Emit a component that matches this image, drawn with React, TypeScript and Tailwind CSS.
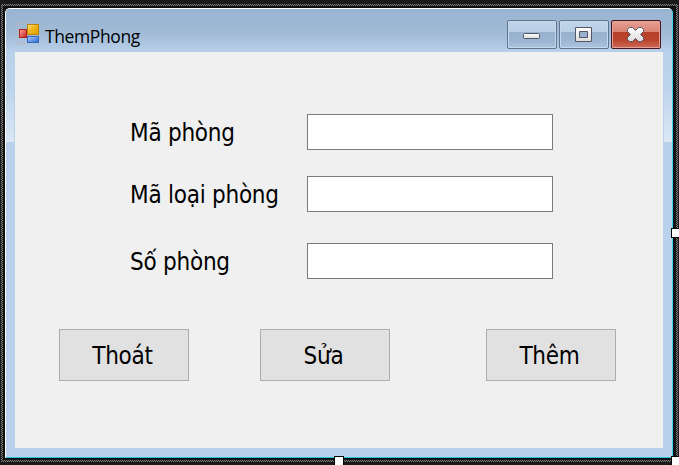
import type { ReactNode } from "react";

const labelFont =
  "font-['DejaVu_Sans_Condensed','DejaVu_Sans',sans-serif] [font-stretch:condensed]";

function AppIcon() {
  return (
    <svg width="22" height="22" viewBox="0 0 22 22">
      <defs>
        <linearGradient id="yel" x1="0" y1="0" x2="1" y2="1">
          <stop offset="0" stopColor="#fbe491" />
          <stop offset=".45" stopColor="#f2b51c" />
          <stop offset="1" stopColor="#dc9c05" />
        </linearGradient>
        <linearGradient id="red" x1="0" y1="0" x2="1" y2="1">
          <stop offset="0" stopColor="#f6a9a0" />
          <stop offset="1" stopColor="#c81c1c" />
        </linearGradient>
        <linearGradient id="blu" x1="0" y1="0" x2="1" y2="1">
          <stop offset="0" stopColor="#a9cbff" />
          <stop offset="1" stopColor="#2b66d4" />
        </linearGradient>
      </defs>
      <path d="M9 .5H.5V20.5H9" fill="none" stroke="#b9b9bd" />
      <rect x="9.5" y="1.5" width="11" height="10" fill="url(#yel)" stroke="#b98508" />
      <rect x="1.5" y="6.5" width="7" height="8" fill="url(#red)" stroke="#b3201f" />
      <rect x="9.5" y="13.5" width="11" height="6" fill="url(#blu)" stroke="#3568b5" />
    </svg>
  );
}

function CaptionButton({ children, close }: { children: ReactNode; close?: boolean }) {
  const frame = close
    ? "border-[#47141f] shadow-[inset_0_0_0_1px_#e5a296] bg-[linear-gradient(#e5a195_0%,#d98072_42%,#b7402a_42%,#b9432d_70%,#cd6a55_100%)]"
    : "border-[#61758f] shadow-[inset_0_0_0_1px_#c5d9ed] bg-[linear-gradient(#c1d5ea_0%,#b8cee5_42%,#98b1cd_42%,#9bb5d1_70%,#abc4de_100%)]";
  return (
    <div className={`flex h-[29px] w-[50px] items-center justify-center rounded-[2px] border ${frame}`}>
      <svg className="shrink-0" width="48" height="27" viewBox="0 0 48 27">
        <defs>
          <linearGradient id="glyph" x1="0" y1="0" x2="0" y2="1">
            <stop offset="0" stopColor="#ffffff" />
            <stop offset="1" stopColor="#dcdcdc" />
          </linearGradient>
        </defs>
        {children}
      </svg>
    </div>
  );
}

function Field({ label, className }: { label: string; className: string }) {
  return (
    <div className={`flex h-9 items-center ${className}`}>
      <label
        className={`w-[178px] pt-0.5 pl-px text-2xl leading-9 whitespace-pre text-black ${labelFont} tracking-[-0.25px]`}
      >
        {label}
      </label>
      <input className="h-9 w-[246px] border border-[#7a7a7a] bg-white px-2 outline-none" />
    </div>
  );
}

function FormButton({ children }: { children: ReactNode }) {
  return (
    <button
      className={`h-[52px] w-[130px] border border-[#adadad] bg-[#e1e1e1] pt-0.5 pr-[3px] text-2xl text-black ${labelFont} tracking-[-0.25px]`}
    >
      {children}
    </button>
  );
}

export default function App() {
  return (
    <div className="relative h-[465px] w-[679px] overflow-hidden bg-[#1b1a1b] pt-1 pl-px">
      <div className="h-[458px] w-[677px] bg-[repeating-conic-gradient(#858585_0%_25%,#1b1a1b_0%_50%)] bg-size-[2px_2px] p-0.5">
        <div className="h-[454px] w-[673px] bg-[#111] pt-[2px] pl-[2px]">
          <div className="flex h-[450px] w-[668px] flex-col overflow-hidden rounded-t-[5px] border-t border-r border-b border-l border-t-white border-r-[#35d4f4] border-b-[#20c5dc] border-l-white bg-[#b9d1ea]">
            <div className="flex h-[43px] shrink-0 items-start bg-linear-to-b from-[#99b4d1] via-[#a2bbd7] via-60% to-[#b9d1ea] pl-3">
              <div className="pt-[14px]">
                <AppIcon />
              </div>
              <div className="ml-[5px] pt-[15px] font-['Open_Sans','Noto_Sans',sans-serif] text-[17.5px] leading-6 tracking-[-0.4px] text-black">
                ThemPhong
              </div>
              <div className="mr-[11px] ml-auto flex gap-[2px] pt-[11px]">
                <CaptionButton>
                  <rect x="15.5" y="12.5" width="16" height="5" rx="1" fill="url(#glyph)" stroke="#535666" />
                </CaptionButton>
                <CaptionButton>
                  <path
                    d="M15.5 6.5H31.5V20.5H15.5ZM19.5 10.5V16.5H27.5V10.5Z"
                    fillRule="evenodd"
                    fill="url(#glyph)"
                    stroke="#535666"
                    strokeLinejoin="round"
                  />
                </CaptionButton>
                <CaptionButton close>
                  <path
                    d="M17.5 6.5H20.5L23.5 9.5L26.5 6.5H29.5L31.5 8.5V10.5L28.5 13.5L31.5 16.5V18.5L29.5 20.5H26.5L23.5 17.5L20.5 20.5H17.5L15.5 18.5V16.5L18.5 13.5L15.5 10.5V8.5Z"
                    fill="url(#glyph)"
                    stroke="#535666"
                    strokeLinejoin="round"
                  />
                </CaptionButton>
              </div>
            </div>
            <div className="flex h-[396px]">
              <div className="w-[9px] pr-px">
                <div className="h-[90px] bg-linear-to-b from-[#b9d1ea] via-[#bdd4ec] via-40% to-[#dbe7f4]" />
              </div>
              <main className="h-[396px] w-[648px] bg-[#f0f0f0] pl-[44px]">
                <div className="pl-[70px]">
                  <Field label="Mã phòng" className="box-content pt-[62px]" />
                  <Field label="Mã loại phòng" className="mt-[26px]" />
                  <Field label="Số phòng" className="mt-[31px]" />
                </div>
                <div className="mt-[50px] flex">
                  <FormButton>Thoát</FormButton>
                  <div className="w-[71px]" />
                  <FormButton>Sửa</FormButton>
                  <div className="w-24" />
                  <FormButton>Thêm</FormButton>
                </div>
              </main>
              <div className="w-[9px] pl-px">
                <div className="h-[90px] bg-linear-to-b from-[#b9d1ea] via-[#bdd4ec] via-40% to-[#dbe7f4]" />
              </div>
            </div>
          </div>
        </div>
      </div>
      <div className="absolute top-[228px] left-[671px] h-[10px] w-[10px] border border-black bg-white" />
      <div className="absolute top-[456px] left-[334px] h-[11px] w-[10px] border border-black bg-white" />
      <div className="absolute top-[456px] left-[671px] h-[11px] w-[10px] border border-black bg-white" />
    </div>
  );
}
